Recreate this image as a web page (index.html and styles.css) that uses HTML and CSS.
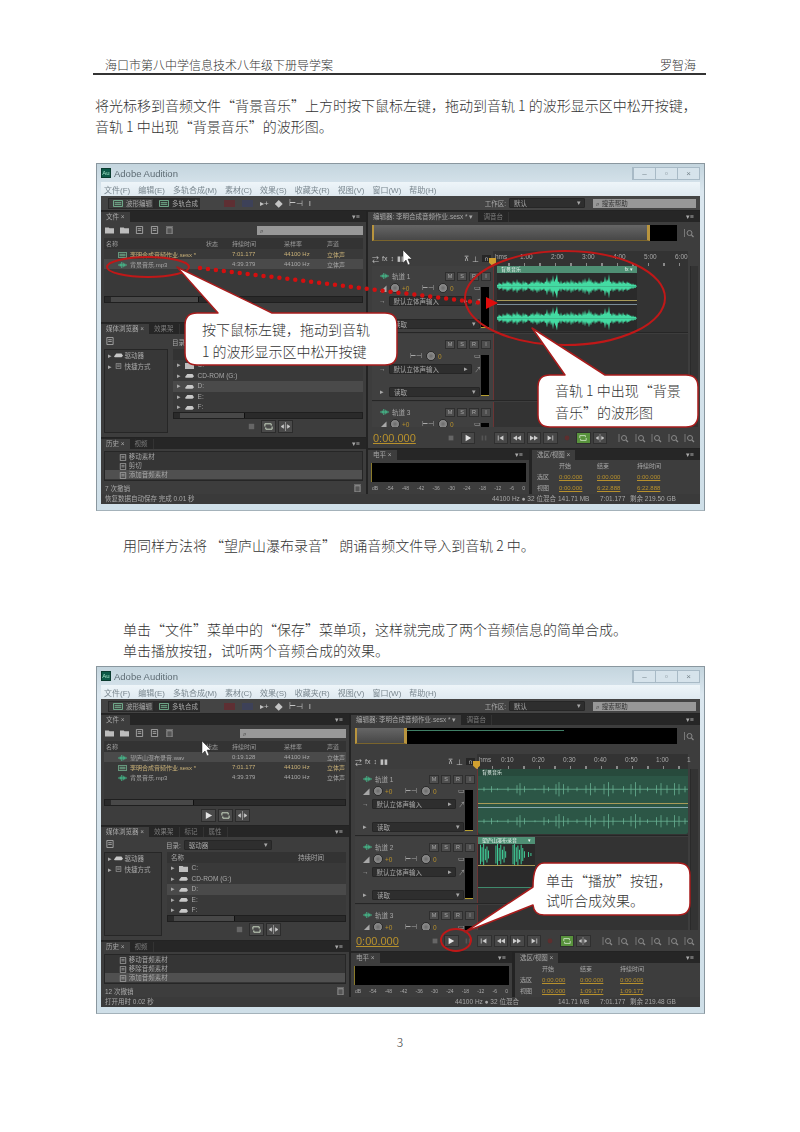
FILE: index.html
```html
<!DOCTYPE html>
<html lang="zh-CN">
<head>
    <meta charset="UTF-8">
    <meta name="viewport" content="width=device-width, initial-scale=1.0">
    <title>海口市第八中学信息技术八年级下册导学案</title>
    <link rel="stylesheet" href="styles.css">
</head>

<body>
    <!-- shared shapes -->
    <svg class="defs" aria-hidden="true">
        <defs>
            <polygon id="wave-top" points="0,13 0,11 1,12 2,9 3,11 4,10 5,12 6,8 7,11 8,9 9,11 10,7 11,10 12,8 13,11 14,9 15,12 16,7 17,10 18,8 19,11 20,6 21,10 22,8 23,11 24,9 25,12 26,7 27,11 28,8 29,10 30,9 31,12 32,10 33,11 34,8 35,10 36,7 37,11 38,8 39,10 40,6 41,10 42,7 43,11 44,8 45,10 46,9 47,11 48,8 49,9 50,4 51,10 52,7 53,11 54,6 55,9 56,2 57,9 58,7 59,5 60,1 61,9 62,8 63,11 64,7 65,11 66,9 67,10 68,8 69,11 70,7 71,10 72,8 73,11 74,6 75,10 76,7 77,11 78,8 79,10 80,9 81,11 82,7 83,10 84,8 85,11 86,6 87,10 88,5 89,10 90,7 91,9 92,4 93,9 94,6 95,10 96,8 97,11 98,7 99,10 100,8 101,11 102,9 103,11 104,7 105,10 106,8 107,9 108,3 109,9 110,6 111,8 112,1 113,9 114,8 115,11 116,7 117,10 118,8 119,11 120,9 121,11 122,7 123,10 124,8 125,11 126,7 127,10 128,9 129,11 130,8 131,10 132,9 133,11 134,10 135,12 136,10 137,12 138,11 139,12 140,13"/>
            <g id="wave"><use href="#wave-top"/><use href="#wave-top" transform="matrix(1 0 0 -1 0 26)"/></g>
            <path id="wave-thin" d="M0 13H140M4 11v4M9 10v6M13 12v2M20 11v4M26 9v8M28 7v12M31 10v6M38 12v2M44 9v8M47 11v4M52 8v10M54 6v14M57 8v10M60 10v6M66 11v4M72 9v8M75 7v12M78 10v6M84 8v10M87 6v14M90 9v8M97 10v6M102 8v10M105 6v14M108 9v8M113 11v4M119 9v8M122 7v12M126 9v8M131 7v12M134 8v10M138 10v6"/>
            <path id="wave-voice" d="M6 1v24M10 4v18M14 0v26M18 6v14M22 3v20M26 8v10M44 2v22M48 0v26M52 5v16M56 1v24M60 7v12M64 3v20M68 9v8M86 1v24M90 0v26M94 4v18M98 2v24M102 7v12M106 1v24M110 5v16M114 9v8M124 10v6M130 11v4"/>
            <symbol id="i-audio" viewBox="0 0 12 8"><path d="M0 4h12M3 2v4M5 0v8M7 1v6M9 2v4" stroke="#45d09a" fill="none"/></symbol>
            <symbol id="i-session" viewBox="0 0 12 8"><path d="M.5.5h11v7H.5zM2 3h8M2 5h8" stroke="#7fc8a0" fill="none"/></symbol>
            <symbol id="i-drive" viewBox="0 0 12 8"><path d="M0 6l3-4h7l2 3-2 2H1z" fill="#c8c8c8"/></symbol>
            <symbol id="i-folder" viewBox="0 0 12 9"><path d="M0 1h5l1 1h6v7H0z" fill="#bdbdbd"/></symbol>
            <symbol id="i-file" viewBox="0 0 10 9"><path d="M1.500.500h7v8h-7zM3 3h4M3 5h4" stroke="#aaa" fill="none"/></symbol>
            <symbol id="i-play" viewBox="0 0 10 10"><path d="M2 1l7 4-7 4z" fill="#e4e4e4"/></symbol>
            <symbol id="i-stop" viewBox="0 0 10 10"><path d="M2 2h6v6H2z" fill="#666"/></symbol>
            <symbol id="i-pause" viewBox="0 0 10 10"><path d="M2 2h2v6H2zM6 2h2v6H6z" fill="#555"/></symbol>
            <symbol id="i-prev" viewBox="0 0 10 10"><path d="M1 2h1v6H1zM3 5l5-3v6z" fill="#ccc"/></symbol>
            <symbol id="i-rew" viewBox="0 0 10 10"><path d="M0 5l5-3v6zM5 5l5-3v6z" fill="#ccc"/></symbol>
            <symbol id="i-ffw" viewBox="0 0 10 10"><path d="M0 2l5 3-5 3zM5 2l5 3-5 3z" fill="#ccc"/></symbol>
            <symbol id="i-next" viewBox="0 0 10 10"><path d="M2 2l5 3-5 3zM8 2h1v6H8z" fill="#ccc"/></symbol>
            <symbol id="i-rec" viewBox="0 0 10 10"><circle cx="5" cy="5" r="3" fill="#5e2e2e"/></symbol>
            <symbol id="i-loop" viewBox="0 0 10 10"><path d="M1 5V2h7v2M9 5v3H2V6" stroke="#d8e8d0" fill="none"/></symbol>
            <symbol id="i-skip" viewBox="0 0 10 10"><path d="M5 0v10M0 5l3-2v4zM10 5L7 3v4z" stroke="#ccc" stroke-width=".6" fill="#ccc"/></symbol>
            <symbol id="i-zoom" viewBox="0 0 10 10"><path d="M.5 1v8" stroke="#777"/><circle cx="5.500" cy="5" r="2.500" stroke="#888" fill="none"/><path d="M7.500 7L9.500 9" stroke="#888" stroke-width="1.200"/></symbol>
            <symbol id="i-trash" viewBox="0 0 8 9"><path d="M0 1h8M1 2h6v7H1z" stroke="#999" fill="#555"/></symbol>
        </defs>
    </svg>

    <div class="page">
        <div class="doc-head">
            <span>海口市第八中学信息技术八年级下册导学案</span>
            <span>罗智海</span>
        </div>

        <p class="para para-first">将光标移到音频文件“背景音乐”上方时按下鼠标左键，拖动到音轨 1 的波形显示区中松开按键，音轨 1 中出现“背景音乐”的波形图。</p>

        <!-- first screenshot -->
        <section class="au au-drag">
            <div class="au-shot">
                <div class="au-title">
                    <span class="au-logo">Au</span>
                    <span>Adobe Audition</span>
                    <div class="au-btns"><i>–</i><i>▫</i><i>×</i></div>
                </div>
                <div class="au-menu"><span>文件(F)</span><span>编辑(E)</span><span>多轨合成(M)</span><span>素材(C)</span><span>效果(S)</span><span>收藏夹(R)</span><span>视图(V)</span><span>窗口(W)</span><span>帮助(H)</span></div>
                <div class="au-app">
                    <div class="au-toolbar">
                        <div class="mode"><svg><use href="#i-session"/></svg>波形编辑</div>
                        <div class="mode mode-on"><svg><use href="#i-session"/></svg>多轨合成</div>
                        <div class="tools"><i class="tool-red"></i><i class="tool-blue"></i><b>▸+</b><b>◆</b><b>⊢⊣</b><b>I</b></div>
                        <div class="workspace">工作区: <span class="select">默认<em>▾</em></span><span class="search">⌕ 搜索帮助</span></div>
                    </div>
                    <div class="au-main">
                        <div class="au-left">
                            <div class="panel panel-files">
                                <div class="tabs"><span class="tab">文件 ×</span><span class="tabs-end">▾≡</span></div>
                                <div class="file-tools">
                                    <svg><use href="#i-folder"/></svg><svg><use href="#i-folder"/></svg><svg><use href="#i-file"/></svg><svg><use href="#i-file"/></svg><svg><use href="#i-trash"/></svg>
                                    <span class="search search-files">⌕</span>
                                </div>
                                <div class="list">
                                    <div class="file-row file-head"><span>名称</span><span>状态</span><span>持续时间</span><span>采样率</span><span>声道</span></div>
                                    <div class="file-row file-session"><span><svg><use href="#i-session"/></svg>李明合成音频作业.sesx *</span><span></span><span>7:01.177</span><span>44100 Hz</span><span>立体声</span></div>
                                    <div class="file-row file-on"><span><svg><use href="#i-audio"/></svg>背景音乐.mp3</span><span></span><span>4:39.379</span><span>44100 Hz</span><span>立体声</span></div>
                                </div>
                                <div class="scroll"><i></i></div>
                                <div class="preview"></div>
                            </div>
                            <div class="panel panel-media">
                                <div class="tabs"><span class="tab">媒体浏览器 ×</span><span class="tab tab-off">效果架</span></div>
                                <div class="dir-row"><span class="dir-icon"><svg><use href="#i-file"/></svg></span><span>目录:</span></div>
                                <div class="media-body">
                                    <div class="tree"><div>▸ <svg><use href="#i-drive"/></svg> 驱动器</div><div>▸ <svg><use href="#i-file"/></svg> 快捷方式</div></div>
                                    <div class="media-right">
                                        <div class="drives">
                                            <div class="drive-head"></div>
                                            <div class="drive">▸ <svg><use href="#i-folder"/></svg> C:</div>
                                            <div class="drive">▸ <svg><use href="#i-drive"/></svg> CD-ROM (G:)</div>
                                            <div class="drive drive-on">▸ <svg><use href="#i-drive"/></svg> D:</div>
                                            <div class="drive">▸ <svg><use href="#i-drive"/></svg> E:</div>
                                            <div class="drive">▸ <svg><use href="#i-drive"/></svg> F:</div>
                                        </div>
                                        <div class="scroll"><i></i></div>
                                        <div class="preview"><b class="off"><svg><use href="#i-stop"/></svg></b><b><svg><use href="#i-loop"/></svg></b><b><svg><use href="#i-skip"/></svg></b></div>
                                    </div>
                                </div>
                            </div>
                            <div class="panel panel-history">
                                <div class="tabs"><span class="tab">历史 ×</span><span class="tab tab-off">视频</span><span class="tabs-end">▾≡</span></div>
                                <div class="hist-list">
                                    <div><svg><use href="#i-file"/></svg> 移动素材</div>
                                    <div><svg><use href="#i-file"/></svg> 剪切</div>
                                    <div class="hist-on"><svg><use href="#i-file"/></svg> 添加音频素材</div>
                                </div>
                                <div class="hist-foot"><span>7 次撤销</span><svg><use href="#i-trash"/></svg></div>
                            </div>
                        </div>
                        <div class="au-right">
                            <div class="panel panel-editor">
                                <div class="tabs"><span class="tab">编辑器: 李明合成音频作业.sesx * ▾</span><span class="tab tab-off">调音台</span><span class="tabs-end">▾≡</span></div>
                                <div class="overview"><div class="ov-track"><div class="ov-range"></div></div><svg><use href="#i-zoom"/></svg></div>
                                <div class="track-tools">
                                    <div class="track-btns"><b>⇄</b><b>fx</b><b>↕</b><b>▮▮</b><span></span><b>⊼</b><b>⊥</b><b class="snap">∩</b></div>
                                    <div class="ruler"><span>hms</span><span>1:00</span><span>2:00</span><span>3:00</span><span>4:00</span><span>5:00</span><span>6:00</span><i class="playhead"></i></div>
                                </div>
                                <div class="tracks">
                                    <div class="track-list">
                                        <div class="track">
                                            <div class="ctl">
                                                <div class="ctl-name"><svg><use href="#i-audio"/></svg>轨道 1<span class="msr"><b>M</b><b>S</b><b>R</b><b>I</b></span></div>
                                                <div class="ctl-knobs"><span>◢</span><i class="knob"></i><em>+0</em><span class="pan">⊢⊣</span><i class="knob"></i><em>0</em><b>▭</b></div>
                                                <div class="ctl-in"><span>→</span><span class="select">默认立体声输入<em>▸</em></span><b>↗</b></div>
                                                <div class="ctl-read"><span>▸</span><span class="select">读取<em>▾</em></span></div>
                                                <div class="meter"></div>
                                            </div>
                                            <div class="lane">
                                                <div class="clip clip-short">
                                                    <div class="clip-head">背景音乐<span>fx ▾</span></div>
                                                    <svg class="wave" viewBox="0 0 140 26" preserveAspectRatio="none"><use href="#wave"/></svg>
                                                    <svg class="wave wave-low" viewBox="0 0 140 26" preserveAspectRatio="none"><use href="#wave"/></svg>
                                                </div>
                                            </div>
                                        </div>
                                        <div class="track">
                                            <div class="ctl">
                                                <div class="ctl-name"><svg><use href="#i-audio"/></svg><span class="msr"><b>M</b><b>S</b><b>R</b><b>I</b></span></div>
                                                <div class="ctl-knobs"><span></span><em></em><span class="pan">⊢⊣</span><i class="knob"></i><em>0</em><b>▭</b></div>
                                                <div class="ctl-in"><span>→</span><span class="select">默认立体声输入<em>▸</em></span><b>↗</b></div>
                                                <div class="ctl-read"><span>▸</span><span class="select">读取<em>▾</em></span></div>
                                                <div class="meter"></div>
                                            </div>
                                            <div class="lane"></div>
                                        </div>
                                        <div class="track">
                                            <div class="ctl">
                                                <div class="ctl-name"><svg><use href="#i-audio"/></svg>轨道 3<span class="msr"><b>M</b><b>S</b><b>R</b><b>I</b></span></div>
                                                <div class="ctl-knobs"><span>◢</span><i class="knob"></i><em>+0</em><span class="pan">⊢⊣</span><i class="knob"></i><em>0</em><b>▭</b></div>
                                                <div class="meter"></div>
                                            </div>
                                            <div class="lane"></div>
                                        </div>
                                    </div>
                                    <div class="vscroll"></div>
                                </div>
                                <div class="transport">
                                    <span class="clock">0:00.000</span>
                                    <div class="t-btns"><b class="bare"><svg><use href="#i-stop"/></svg></b><b><svg><use href="#i-play"/></svg></b><b class="bare"><svg><use href="#i-pause"/></svg></b><b><svg><use href="#i-prev"/></svg></b><b><svg><use href="#i-rew"/></svg></b><b><svg><use href="#i-ffw"/></svg></b><b><svg><use href="#i-next"/></svg></b><b class="bare"><svg><use href="#i-rec"/></svg></b><b class="loop"><svg><use href="#i-loop"/></svg></b><b><svg><use href="#i-skip"/></svg></b></div>
                                    <div class="z-btns"><svg><use href="#i-zoom"/></svg><svg><use href="#i-zoom"/></svg><svg><use href="#i-zoom"/></svg><svg><use href="#i-zoom"/></svg><svg><use href="#i-zoom"/></svg></div>
                                </div>
                            </div>
                            <div class="au-lower">
                                <div class="panel panel-levels">
                                    <div class="tabs"><span class="tab">电平 ×</span><span class="tabs-end">▾≡</span></div>
                                    <div class="level-bar"></div>
                                    <div class="level-scale"><span>dB</span><span>-54</span><span>-48</span><span>-42</span><span>-36</span><span>-30</span><span>-24</span><span>-18</span><span>-12</span><span>-6</span><span>0</span></div>
                                </div>
                                <div class="panel panel-sel">
                                    <div class="tabs"><span class="tab">选区/视图 ×</span><span class="tabs-end">▾≡</span></div>
                                    <div class="sel-grid">
                                        <span></span><span>开始</span><span>结束</span><span>持续时间</span>
                                        <span>选区</span><u>0:00.000</u><u>0:00.000</u><u>0:00.000</u>
                                        <span>视图</span><u>0:00.000</u><u>6:22.888</u><u>6:22.888</u>
                                    </div>
                                </div>
                            </div>
                        </div>
                    </div>
                    <div class="au-status">
                        <span class="status-msg">恢复数据自动保存 完成 0.01 秒</span>
                        <span class="status-rate">44100 Hz ● 32 位混合</span><span class="status-mem">141.71 MB</span><span class="status-len">7:01.177</span><span class="status-free">剩余 219.50 GB</span>
                    </div>
                </div>
            </div>

            <!-- red notes drawn over the screenshot -->
            <svg class="notes" viewBox="96 163 609 348">
                <ellipse class="ring" cx="148" cy="267" rx="41" ry="10"/>
                <ellipse class="ring" cx="565" cy="298" rx="100" ry="47"/>
                <line class="dots" x1="200" y1="268" x2="482" y2="303"/>
                <path class="arrow" d="M486 297l12 6-12 6z"/>
                <path class="cursor" d="M403 250v13l3-3 2 5 2-1-2-5h4z"/>
                <path class="bubble" d="M197 313H218L177 267L272 313H385Q397 313 397 325V353Q397 365 385 365H197Q185 365 185 353V325Q185 313 197 313Z"/>
                <text x="202" y="335">按下鼠标左键，拖动到音轨</text>
                <text x="202" y="357">1 的波形显示区中松开按键</text>
                <path class="bubble" d="M550 375H565L532 328L605 375H686Q698 375 698 387V415Q698 427 686 427H550Q538 427 538 415V387Q538 375 550 375Z"/>
                <text x="555" y="396">音轨 1 中出现“背景</text>
                <text x="555" y="418">音乐”的波形图</text>
            </svg>
        </section>

        <p class="para para-indent para-mid">用同样方法将 “望庐山瀑布录音” 朗诵音频文件导入到音轨 2 中。</p>
        <p class="para para-indent para-save">单击“文件”菜单中的“保存”菜单项，这样就完成了两个音频信息的简单合成。<br>单击播放按钮，试听两个音频合成的效果。</p>

        <!-- second screenshot -->
        <section class="au au-play">
            <div class="au-shot">
                <div class="au-title">
                    <span class="au-logo">Au</span>
                    <span>Adobe Audition</span>
                    <div class="au-btns"><i>–</i><i>▫</i><i>×</i></div>
                </div>
                <div class="au-menu"><span>文件(F)</span><span>编辑(E)</span><span>多轨合成(M)</span><span>素材(C)</span><span>效果(S)</span><span>收藏夹(R)</span><span>视图(V)</span><span>窗口(W)</span><span>帮助(H)</span></div>
                <div class="au-app">
                    <div class="au-toolbar">
                        <div class="mode"><svg><use href="#i-session"/></svg>波形编辑</div>
                        <div class="mode mode-on"><svg><use href="#i-session"/></svg>多轨合成</div>
                        <div class="tools"><i class="tool-red"></i><i class="tool-blue"></i><b>▸+</b><b>◆</b><b>⊢⊣</b><b>I</b></div>
                        <div class="workspace">工作区: <span class="select">默认<em>▾</em></span><span class="search">⌕ 搜索帮助</span></div>
                    </div>
                    <div class="au-main">
                        <div class="au-left">
                            <div class="panel panel-files">
                                <div class="tabs"><span class="tab">文件 ×</span><span class="tabs-end">▾≡</span></div>
                                <div class="file-tools">
                                    <svg><use href="#i-folder"/></svg><svg><use href="#i-folder"/></svg><svg><use href="#i-file"/></svg><svg><use href="#i-file"/></svg><svg><use href="#i-trash"/></svg>
                                    <span class="search search-files">⌕</span>
                                </div>
                                <div class="list">
                                    <div class="file-row file-head"><span>名称</span><span>状态</span><span>持续时间</span><span>采样率</span><span>声道</span></div>
                                    <div class="file-row file-on"><span><svg><use href="#i-audio"/></svg>望庐山瀑布录音.wav</span><span></span><span>0:19.128</span><span>44100 Hz</span><span>立体声</span></div>
                                    <div class="file-row file-session"><span><svg><use href="#i-session"/></svg>李明合成音频作业.sesx *</span><span></span><span>7:01.177</span><span>44100 Hz</span><span>立体声</span></div>
                                    <div class="file-row"><span><svg><use href="#i-audio"/></svg>背景音乐.mp3</span><span></span><span>4:39.379</span><span>44100 Hz</span><span>立体声</span></div>
                                </div>
                                <div class="scroll"><i></i></div>
                                <div class="preview"><b><svg><use href="#i-play"/></svg></b><b><svg><use href="#i-loop"/></svg></b><b><svg><use href="#i-skip"/></svg></b></div>
                            </div>
                            <div class="panel panel-media">
                                <div class="tabs"><span class="tab">媒体浏览器 ×</span><span class="tab tab-off">效果架</span><span class="tab tab-off">标记</span><span class="tab tab-off">属性</span><span class="tabs-end">▾≡</span></div>
                                <div class="dir-row"><span class="dir-icon"><svg><use href="#i-file"/></svg></span><span>目录:</span><span class="select dir-select">驱动器<em>▾</em></span></div>
                                <div class="media-body">
                                    <div class="tree"><div>▸ <svg><use href="#i-drive"/></svg> 驱动器</div><div>▸ <svg><use href="#i-file"/></svg> 快捷方式</div></div>
                                    <div class="media-right">
                                        <div class="drives">
                                            <div class="drive-head"><span>名称</span><span>持续时间</span></div>
                                            <div class="drive">▸ <svg><use href="#i-folder"/></svg> C:</div>
                                            <div class="drive">▸ <svg><use href="#i-drive"/></svg> CD-ROM (G:)</div>
                                            <div class="drive drive-on">▸ <svg><use href="#i-drive"/></svg> D:</div>
                                            <div class="drive">▸ <svg><use href="#i-drive"/></svg> E:</div>
                                            <div class="drive">▸ <svg><use href="#i-drive"/></svg> F:</div>
                                        </div>
                                        <div class="scroll"><i></i></div>
                                        <div class="preview"><b class="off"><svg><use href="#i-stop"/></svg></b><b><svg><use href="#i-loop"/></svg></b><b><svg><use href="#i-skip"/></svg></b></div>
                                    </div>
                                </div>
                            </div>
                            <div class="panel panel-history">
                                <div class="tabs"><span class="tab">历史 ×</span><span class="tab tab-off">视频</span><span class="tabs-end">▾≡</span></div>
                                <div class="hist-list">
                                    <div><svg><use href="#i-file"/></svg> 移动音频素材</div>
                                    <div><svg><use href="#i-file"/></svg> 移除音频素材</div>
                                    <div class="hist-on"><svg><use href="#i-file"/></svg> 添加音频素材</div>
                                </div>
                                <div class="hist-foot"><span>12 次撤销</span><svg><use href="#i-trash"/></svg></div>
                            </div>
                        </div>
                        <div class="au-right">
                            <div class="panel panel-editor">
                                <div class="tabs"><span class="tab">编辑器: 李明合成音频作业.sesx * ▾</span><span class="tab tab-off">调音台</span><span class="tabs-end">▾≡</span></div>
                                <div class="overview"><div class="ov-track"><div class="ov-range"></div></div><svg><use href="#i-zoom"/></svg></div>
                                <div class="track-tools">
                                    <div class="track-btns"><b>⇄</b><b>fx</b><b>↕</b><b>▮▮</b><span></span><b>⊼</b><b>⊥</b><b class="snap">∩</b></div>
                                    <div class="ruler"><span>hms</span><span>0:10</span><span>0:20</span><span>0:30</span><span>0:40</span><span>0:50</span><span>1:00</span><span>1</span><i class="playhead"></i></div>
                                </div>
                                <div class="tracks">
                                    <div class="track-list">
                                        <div class="track">
                                            <div class="ctl">
                                                <div class="ctl-name"><svg><use href="#i-audio"/></svg>轨道 1<span class="msr"><b>M</b><b>S</b><b>R</b><b>I</b></span></div>
                                                <div class="ctl-knobs"><span>◢</span><i class="knob"></i><em>+0</em><span class="pan">⊢⊣</span><i class="knob"></i><em>0</em><b>▭</b></div>
                                                <div class="ctl-in"><span>→</span><span class="select">默认立体声输入<em>▸</em></span><b>↗</b></div>
                                                <div class="ctl-read"><span>▸</span><span class="select">读取<em>▾</em></span></div>
                                                <div class="meter"></div>
                                            </div>
                                            <div class="lane">
                                                <div class="clip clip-full">
                                                    <div class="clip-head">背景音乐</div>
                                                    <svg class="wave" viewBox="0 0 140 26" preserveAspectRatio="none"><use href="#wave-thin"/></svg>
                                                    <svg class="wave wave-low" viewBox="0 0 140 26" preserveAspectRatio="none"><use href="#wave-thin"/></svg>
                                                </div>
                                            </div>
                                        </div>
                                        <div class="track">
                                            <div class="ctl">
                                                <div class="ctl-name"><svg><use href="#i-audio"/></svg>轨道 2<span class="msr"><b>M</b><b>S</b><b>R</b><b>I</b></span></div>
                                                <div class="ctl-knobs"><span>◢</span><i class="knob"></i><em>+0</em><span class="pan">⊢⊣</span><i class="knob"></i><em>0</em><b>▭</b></div>
                                                <div class="ctl-in"><span>→</span><span class="select">默认立体声输入<em>▸</em></span><b>↗</b></div>
                                                <div class="ctl-read"><span>▸</span><span class="select">读取<em>▾</em></span></div>
                                                <div class="meter"></div>
                                            </div>
                                            <div class="lane">
                                                <div class="clip clip-voice">
                                                    <div class="clip-head">望庐山瀑布录音<span>▾</span></div>
                                                    <svg class="wave" viewBox="0 0 140 26" preserveAspectRatio="none"><use href="#wave-voice"/></svg>
                                                    <div class="clip-flat"></div>
                                                </div>
                                            </div>
                                        </div>
                                        <div class="track">
                                            <div class="ctl">
                                                <div class="ctl-name"><svg><use href="#i-audio"/></svg>轨道 3<span class="msr"><b>M</b><b>S</b><b>R</b><b>I</b></span></div>
                                                <div class="ctl-knobs"><span>◢</span><i class="knob"></i><em>+0</em><span class="pan">⊢⊣</span><i class="knob"></i><em>0</em><b>▭</b></div>
                                                <div class="meter"></div>
                                            </div>
                                            <div class="lane"></div>
                                        </div>
                                    </div>
                                    <div class="vscroll"></div>
                                </div>
                                <div class="transport">
                                    <span class="clock">0:00.000</span>
                                    <div class="t-btns"><b class="bare"><svg><use href="#i-stop"/></svg></b><b><svg><use href="#i-play"/></svg></b><b class="bare"><svg><use href="#i-pause"/></svg></b><b><svg><use href="#i-prev"/></svg></b><b><svg><use href="#i-rew"/></svg></b><b><svg><use href="#i-ffw"/></svg></b><b><svg><use href="#i-next"/></svg></b><b class="bare"><svg><use href="#i-rec"/></svg></b><b class="loop"><svg><use href="#i-loop"/></svg></b><b><svg><use href="#i-skip"/></svg></b></div>
                                    <div class="z-btns"><svg><use href="#i-zoom"/></svg><svg><use href="#i-zoom"/></svg><svg><use href="#i-zoom"/></svg><svg><use href="#i-zoom"/></svg><svg><use href="#i-zoom"/></svg><svg><use href="#i-zoom"/></svg></div>
                                </div>
                            </div>
                            <div class="au-lower">
                                <div class="panel panel-levels">
                                    <div class="tabs"><span class="tab">电平 ×</span><span class="tabs-end">▾≡</span></div>
                                    <div class="level-bar"></div>
                                    <div class="level-scale"><span>dB</span><span>-54</span><span>-48</span><span>-42</span><span>-36</span><span>-30</span><span>-24</span><span>-18</span><span>-12</span><span>-6</span><span>0</span></div>
                                </div>
                                <div class="panel panel-sel">
                                    <div class="tabs"><span class="tab">选区/视图 ×</span><span class="tabs-end">▾≡</span></div>
                                    <div class="sel-grid">
                                        <span></span><span>开始</span><span>结束</span><span>持续时间</span>
                                        <span>选区</span><u>0:00.000</u><u>0:00.000</u><u>0:00.000</u>
                                        <span>视图</span><u>0:00.000</u><u>1:09.177</u><u>1:09.177</u>
                                    </div>
                                </div>
                            </div>
                        </div>
                    </div>
                    <div class="au-status">
                        <span class="status-msg">打开用时 0.02 秒</span>
                        <span class="status-rate">44100 Hz ● 32 位混合</span><span class="status-mem">141.71 MB</span><span class="status-len">7:01.177</span><span class="status-free">剩余 219.48 GB</span>
                    </div>
                </div>
            </div>

            <svg class="notes" viewBox="96 666 609 348">
                <path class="cursor" d="M202 741v13l3-3 2 5 2-1-2-5h4z"/>
                <ellipse class="ring" cx="456" cy="940" rx="15" ry="11"/>
                <path class="bubble" d="M544 863H678Q690 863 690 875V903Q690 915 678 915H544Q534 915 533 905L465 932L533 887Q533 863 544 863Z"/>
                <text x="546" y="886">单击“播放”按钮，</text>
                <text x="546" y="906">试听合成效果。</text>
            </svg>
        </section>

        <div class="page-num">3</div>
    </div>
</body>
</html>
```

FILE: styles.css
```css
html, body {
    margin: 0;
    background: #ffffff;
}

.defs {
    position: absolute;
    width: 0;
    height: 0;
}

.page {
    width: 800px;
    height: 1132px;
    overflow: hidden;
    color: #333333;
    font-family: "Noto Sans CJK SC", "Liberation Sans", sans-serif;
    font-weight: 300;
}

.doc-head {
    display: flex;
    justify-content: space-between;
    margin: 0 94px 0 93px;
    padding: 57px 10px 1px 12px;
    border-bottom: 2px solid #333333;
    font-size: 12px;
    line-height: 15px;
}

.para {
    margin: 0 100px 0 95px;
    font-size: 14px;
    line-height: 21px;
}
.para-first { margin-top: 20px; }
.para-indent { margin-left: 123px; }
.para-mid { margin-top: 24px; }
.para-save { margin-top: 63px; line-height: 20.5px; }

.page-num {
    margin-top: 20px;
    text-align: center;
    font-size: 12px;
    line-height: 15px;
}

/* screenshot window */
.au {
    position: relative;
    width: 609px;
    height: 348px;
    margin-left: 96px;
    font-size: 6.5px;
    font-family: "Liberation Sans", "Noto Sans CJK SC", sans-serif;
    font-weight: 400;
}
.au-drag { margin-top: 26px; --left: 265px; --tree: 64px; --ctl: 121px; --hms: 25px; --rate: 66px; }
.au-play { margin-top: 6px; --left: 248px; --tree: 58px; --ctl: 122px; --hms: 22px; --rate: 103px; }

.au-shot {
    display: flex;
    flex-direction: column;
    box-sizing: border-box;
    height: 100%;
    padding: 0 4px 6px;
    background: linear-gradient(#c4d5de, #dbe7ef 8%, #cfdfe8);
    border: 1px solid #8a979f;
    border-bottom-color: #a4b2ba;
    filter: blur(.4px);
}

.au-title {
    display: flex;
    align-items: center;
    height: 18px;
    gap: 3px;
    color: #5e6c74;
    font-size: 9.5px;
}
.au-logo {
    width: 10px;
    height: 10px;
    background: #0c5a48;
    border: 1px solid #0a3b2e;
    box-sizing: border-box;
    color: #9fe0c4;
    font-size: 6px;
    line-height: 8px;
    text-align: center;
}
.au-btns {
    display: flex;
    margin-left: auto;
    border: 1px solid #a8bac6;
    background: #d6e3eb;
}
.au-btns i {
    width: 21px;
    height: 11px;
    border-left: 1px solid #a8bac6;
    color: #76848c;
    font-size: 8px;
    font-style: normal;
    line-height: 11px;
    text-align: center;
}

.au-menu {
    display: flex;
    align-items: center;
    gap: 8px;
    height: 14px;
    padding-left: 3px;
    background: linear-gradient(#eef5f9, #dfe9f0);
    color: #79868e;
    font-size: 8px;
}

.au-app {
    flex: 1;
    display: flex;
    flex-direction: column;
    min-height: 0;
    background: #232323;
    color: #a8a8a8;
}

.au-toolbar {
    display: flex;
    align-items: center;
    height: 14px;
    padding-left: 7px;
    background: #444444;
}
.mode {
    display: flex;
    align-items: center;
    gap: 3px;
    width: 46px;
    height: 11px;
    padding-left: 4px;
    box-sizing: border-box;
    background: #3c3c3c;
    border: 1px solid #2a2a2a;
}
.mode-on { background: #2c2c2c; }
.mode svg { width: 10px; height: 7px; }
.tools {
    display: flex;
    align-items: center;
    gap: 6px;
    margin-left: 24px;
    font-size: 8px;
}
.tools b { font-weight: 400; color: #c4c4c4; }
.tools i { width: 11px; height: 7px; margin-right: 1px; }
.tool-red { background: #5e2f33; }
.tool-blue { background: #3d4158; margin-right: 13px; }
.workspace {
    display: flex;
    align-items: center;
    gap: 3px;
    margin-left: auto;
    margin-right: 4px;
}
.select {
    display: flex;
    align-items: center;
    justify-content: space-between;
    box-sizing: border-box;
    height: 10px;
    padding: 0 3px 0 4px;
    background: #2e2e2e;
    border: 1px solid #262626;
    border-radius: 1px;
    color: #a8a8a8;
}
.select em { font-style: normal; }
.workspace .select { width: 76px; margin-right: 5px; }
.search {
    display: block;
    box-sizing: border-box;
    width: 103px;
    height: 9px;
    padding-left: 3px;
    background: #989898;
    color: #333333;
    line-height: 9px;
}

.au-main {
    flex: 1;
    display: grid;
    grid-template-columns: var(--left) minmax(0, 1fr);
    gap: 2px;
    min-height: 0;
    padding-top: 1px;
}
.au-left, .au-right {
    display: flex;
    flex-direction: column;
    gap: 1px;
    min-width: 0;
}

.panel {
    display: flex;
    flex-direction: column;
    min-height: 0;
    background: #3d3d3d;
}
.tabs {
    flex: none;
    display: flex;
    align-items: flex-end;
    height: 11px;
    background: #262626;
    line-height: 10px;
}
.tab {
    height: 10px;
    padding: 0 5px;
    background: #3d3d3d;
    white-space: nowrap;
}
.tab-off { background: none; color: #7c7c7c; border-right: 1px solid #333333; }
.tabs-end { margin-left: auto; margin-right: 6px; color: #aaaaaa; }

.panel-files { height: 111px; }
.file-tools {
    flex: none;
    display: flex;
    align-items: center;
    gap: 6px;
    height: 16px;
    padding: 0 3px 0 4px;
}
.file-tools svg { width: 9px; height: 8px; }
.search-files { margin-left: auto; width: 106px; }

.list {
    flex: 1;
    margin: 0 3px;
    background: #393939;
    overflow: hidden;
}
.file-row {
    display: grid;
    grid-template-columns: 100px 26px 52px 43px 30px;
    align-items: center;
    height: 10px;
    padding-left: 2px;
    white-space: nowrap;
    font-size: 6px;
}
.file-row svg { width: 9px; height: 6px; margin: 0 3px 0 12px; vertical-align: middle; }
.file-head { height: 11px; background: #333333; color: #9c9c9c; }
.file-on { background: #4a4a4a; }
.file-session { color: #c9b178; }

.scroll {
    flex: none;
    display: flex;
    height: 7px;
    margin: 0 3px;
    background: #2a2a2a;
    border: 1px solid #1f1f1f;
    box-sizing: border-box;
}
.scroll i { width: 34%; margin-left: 6px; background: #484848; border-right: 1px solid #111111; }

.preview {
    flex: none;
    display: flex;
    justify-content: center;
    align-items: center;
    gap: 2px;
    height: 19px;
}
.preview b {
    display: flex;
    align-items: center;
    justify-content: center;
    width: 13px;
    height: 11px;
    background: #4a4a4a;
    border: 1px solid #2c2c2c;
}
.preview b.off { background: none; border-color: transparent; }
.preview svg { width: 9px; height: 9px; }

.panel-media { height: 114px; }
.dir-row {
    flex: none;
    display: flex;
    align-items: center;
    gap: 3px;
    height: 15px;
    padding-left: 4px;
}
.dir-row svg { width: 10px; height: 8px; }
.dir-icon { width: var(--tree); }
.dir-select { width: 88px; }
.media-body {
    flex: 1;
    display: flex;
    gap: 5px;
    min-height: 0;
    padding: 0 3px 4px;
}
.tree {
    box-sizing: border-box;
    width: var(--tree);
    padding: 1px 3px;
    background: #373737;
    border: 1px solid #262626;
    line-height: 10.5px;
    white-space: nowrap;
}
.tree svg { width: 9px; height: 6px; }
.media-right {
    flex: 1;
    display: flex;
    flex-direction: column;
    min-width: 0;
}
.media-right .scroll { margin: 0; }
.media-right .preview { height: 14px; }
.drives {
    flex: 1;
    min-height: 0;
    overflow: hidden;
    background: #393939;
}
.drive-head {
    display: flex;
    justify-content: space-between;
    height: 11px;
    padding: 0 22px 0 4px;
    background: #333333;
    line-height: 11px;
}
.drive {
    height: 10.5px;
    padding-left: 4px;
    line-height: 10.5px;
}
.drive svg { width: 9px; height: 7px; margin: 0 2px; vertical-align: middle; }
.drive-on { background: #4a4a4a; }

.panel-history { flex: 1; }
.hist-list {
    height: 28px;
    margin: 2px 3px 0;
    background: #353535;
    border: 1px solid #262626;
    line-height: 9px;
    overflow: hidden;
}
.hist-list div { padding-left: 14px; }
.hist-list svg { width: 8px; height: 7px; vertical-align: middle; }
.hist-on { background: #505050; }
.hist-foot {
    display: flex;
    justify-content: space-between;
    align-items: center;
    flex: 1;
    padding: 0 5px 0 4px;
}
.hist-foot svg { width: 7px; height: 8px; }

.panel-editor { flex: 1; min-width: 0; }
.overview {
    flex: none;
    display: flex;
    align-items: center;
    gap: 7px;
    height: 25px;
    padding: 0 6px 4px 4px;
    box-sizing: border-box;
}
.ov-track { flex: 1; height: 16px; background: #000000; }
.ov-range {
    box-sizing: border-box;
    height: 100%;
    background: linear-gradient(#666666, #474747);
    border-left: 2px solid #b8943e;
    border-right: 3px solid #b8943e;
    border-bottom: 1px solid #7a642c;
}
.au-drag .ov-range { width: 91%; }
.au-play .ov-range { width: 16%; }
.au-play .ov-track { background: linear-gradient(#3f7f66, #3f7f66) 0 2px / 65% 1px no-repeat, #000000; }
.overview svg { width: 10px; height: 10px; }

.track-tools {
    flex: none;
    display: flex;
    height: 15px;
    margin-top: 4px;
    padding-left: 4px;
}
.track-btns {
    flex: none;
    display: flex;
    align-items: center;
    gap: 3px;
    box-sizing: border-box;
    width: var(--ctl);
    padding-right: 2px;
    font-size: 7px;
}
.track-btns b { font-weight: 400; color: #c0c0c0; }
.track-btns span { flex: 1; }
.track-btns .snap { padding: 0 2px; background: #262626; color: #e4e4e4; }
.ruler {
    position: relative;
    flex: 1;
    min-width: 0;
    display: flex;
    margin-right: 12px;
    background: repeating-linear-gradient(90deg, #8a8a8a 0 1px, transparent 1px 15.5px) left bottom / 100% 3px no-repeat, #333333;
}
.ruler span { flex: none; width: 31px; padding-left: 2px; box-sizing: border-box; line-height: 11px; white-space: nowrap; }
.ruler span:first-child { width: var(--hms); }
.ruler span:last-of-type { width: 12px; }
.playhead {
    position: absolute;
    left: -4px;
    top: 7px;
    width: 7px;
    height: 8px;
    background: #d0a030;
    clip-path: polygon(0 0, 100% 0, 100% 60%, 50% 100%, 0 60%);
}

.tracks {
    flex: none;
    display: flex;
    height: 161px;
    padding-left: 4px;
    overflow: hidden;
}
.track-list { flex: 1; min-width: 0; }
.vscroll { flex: none; width: 8px; margin: 0 2px; background: #333333; border-left: 1px solid #2a2a2a; box-sizing: border-box; }
.track {
    display: flex;
    height: 66px;
    margin-bottom: 1px;
    background: #3d3d3d;
    border-bottom: 1px solid #262626;
}
.ctl {
    flex: none;
    display: grid;
    grid-template-columns: 1fr 12px;
    grid-template-rows: 12px 12px 12px 12px;
    align-content: start;
    box-sizing: border-box;
    width: var(--ctl);
    padding: 4px 0 0 2px;
    background: #404040;
}
.ctl-name {
    grid-column: 1 / 3;
    display: flex;
    align-items: center;
    gap: 3px;
}
.ctl-name svg { width: 9px; height: 6px; margin-left: 6px; }
.msr { display: flex; gap: 2px; margin-left: auto; margin-right: 2px; }
.msr b {
    width: 10px;
    height: 9px;
    background: #4e4e4e;
    border: 1px solid #2f2f2f;
    box-sizing: border-box;
    font-size: 5.5px;
    font-weight: 400;
    line-height: 7px;
    text-align: center;
}
.ctl-knobs {
    display: flex;
    align-items: center;
    gap: 2px;
    padding-left: 6px;
    white-space: nowrap;
}
.ctl-knobs span:first-child { width: 8px; }
.ctl-knobs em { width: 18px; color: #b8912c; font-style: normal; }
.ctl-knobs .pan { width: 14px; }
.ctl-knobs b { margin-left: auto; font-weight: 400; }
.knob {
    flex: none;
    width: 10px;
    height: 10px;
    border-radius: 50%;
    background: radial-gradient(circle, #6a6a6a, #a0a0a0);
    border: 1px solid #2a2a2a;
    box-sizing: border-box;
}
.ctl-in {
    grid-row: 3;
    display: flex;
    align-items: center;
    gap: 3px;
    padding-left: 5px;
    margin-top: 1px;
}
.ctl-in .select { flex: 1; }
.ctl-in b { font-weight: 400; }
.ctl-read {
    grid-row: 4;
    display: flex;
    align-items: center;
    gap: 5px;
    padding-left: 6px;
    margin-top: 12px;
    height: 12px;
}
.ctl-read .select { flex: 1; margin-right: 1px; }
.meter {
    grid-row: 2 / 5;
    grid-column: 2;
    width: 8px;
    height: 41px;
    margin-top: 5px;
    background: #000000;
    border-bottom: 1px solid #b8a030;
    box-sizing: border-box;
}
.lane {
    flex: 1;
    min-width: 0;
    background: #333333;
    border-left: 1px solid #6b3434;
}

.clip {
    display: flex;
    flex-direction: column;
    height: 65px;
    overflow: hidden;
    color: #43dba2;
    background: #2a2a2a;
    border-radius: 0 0 2px 2px;
}
.clip-head {
    flex: none;
    display: flex;
    justify-content: space-between;
    height: 7px;
    padding: 0 4px;
    background: #4f8f74;
    color: #e8f4ee;
    font-size: 5px;
    line-height: 7px;
}
.wave {
    flex: 1;
    min-height: 0;
    width: 100%;
    fill: currentColor;
    stroke: none;
    border-bottom: 1px solid #a89a58;
}
.wave-low { border-bottom: none; border-top: 1px solid #7a8c96; margin-top: 3px; }
.clip-short { width: 140px; margin-left: 3px; }
.clip-full { background: #2c5646; color: #6ab596; }
.clip-full .clip-head { background: #274a3c; }
.clip-full .wave { fill: none; stroke: currentColor; stroke-width: .6; }
.clip-full .wave-low { border-top-color: #88aab0; }
.clip-voice { width: 57px; }
.clip-voice .wave { flex: none; height: 21px; fill: none; stroke: currentColor; stroke-width: 2.2; }
.clip-flat {
    flex: 1;
    margin-top: 21px;
    border-top: 1px solid #3f8a6c;
    background: #333333;
}

.transport {
    flex: 1;
    display: flex;
    align-items: center;
    padding: 0 5px;
}
.clock {
    color: #b8912c;
    font-size: 11px;
    text-decoration: underline;
    text-underline-offset: 1px;
}
.t-btns {
    display: flex;
    align-items: center;
    gap: 2px;
    margin-left: auto;
}
.t-btns b {
    display: flex;
    align-items: center;
    justify-content: center;
    box-sizing: border-box;
    width: 14.5px;
    height: 12px;
    background: #484848;
    border: 1px solid #2f2f2f;
}
.t-btns b.bare { background: none; border-color: transparent; }
.t-btns b.loop { background: #58923c; }
.t-btns svg { width: 8px; height: 8px; }
.z-btns { display: flex; gap: 5.5px; margin-left: 11px; }
.z-btns svg { width: 11px; height: 10px; }

.au-lower {
    flex: none;
    display: grid;
    grid-template-columns: 161px 1fr;
    gap: 3px;
    height: 45px;
}
.level-bar {
    height: 19px;
    margin: 3px 3px 0;
    background: #000000;
    border-left: 1px solid #8a7a2a;
}
.level-scale {
    display: flex;
    justify-content: space-between;
    padding: 2px 4px 0;
    font-size: 5px;
    line-height: 8px;
}
.sel-grid {
    display: grid;
    grid-template-columns: 20px 36px 38px 1fr;
    column-gap: 2px;
    padding: 1px 0 0 5px;
    font-size: 6px;
    line-height: 11px;
}
.sel-grid u { color: #b8912c; }

.au-status {
    flex: none;
    display: flex;
    height: 10px;
    padding: 0 30px 0 4px;
    background: #3a3a3a;
    line-height: 10px;
    white-space: nowrap;
}
.status-msg { margin-right: auto; }
.status-rate { width: var(--rate); }
.status-mem { width: 42px; }
.status-len { width: 30px; }
.status-free { width: 40px; }

/* red notes over the screenshot */
.notes {
    position: absolute;
    inset: 0;
    width: 100%;
    height: 100%;
    overflow: visible;
}
.notes text {
    fill: #333333;
    font-family: "Noto Sans CJK SC", "Liberation Sans", sans-serif;
    font-size: 14px;
    font-weight: 300;
}
.ring {
    fill: none;
    stroke: #c01818;
    stroke-width: 2;
}
.dots {
    stroke: #d40f0f;
    stroke-width: 4.5;
    stroke-linecap: round;
    stroke-dasharray: 0 8;
}
.arrow { fill: #e00c0c; }
.cursor { fill: #ffffff; stroke: #222222; stroke-width: .5; }
.bubble {
    fill: #ffffff;
    stroke: #a81c1c;
    stroke-width: 1.5;
    stroke-linejoin: round;
}
```
